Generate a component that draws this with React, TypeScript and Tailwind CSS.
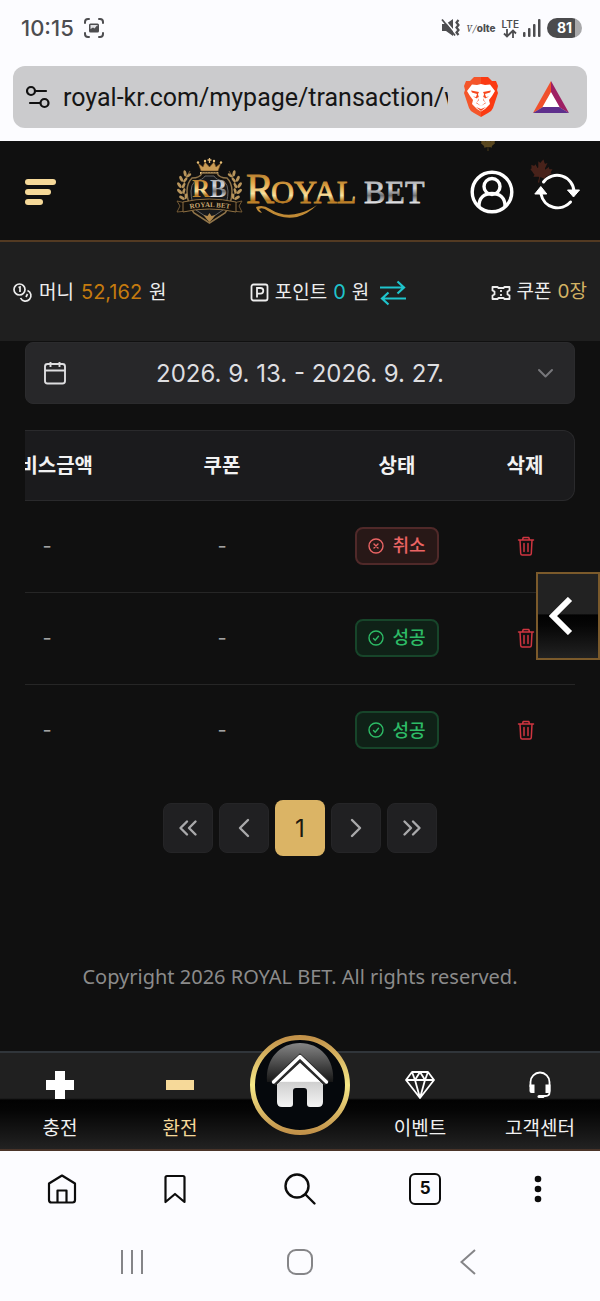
import React from "react";
import { FaCanadianMapleLeaf } from "react-icons/fa";

const laurel = [
  [12, 17, -20],
  [8, 22, -5],
  [6, 28, 5],
  [6, 34, 15],
  [8, 40, 30],
];

function StatusBar() {
  return (
    <div className="flex h-14 items-center justify-between pl-[21px] pr-[18px] text-[#4d4d50]">
      <div className="flex items-center gap-2.5">
        <span className="text-[22px] font-medium leading-7">10:15</span>
        <svg width="20" height="20" viewBox="0 0 20 20" fill="none" stroke="currentColor" strokeWidth="2" strokeLinecap="round">
          <path d="M1 5V4a3 3 0 0 1 3-3h1M15 1h1a3 3 0 0 1 3 3v1M19 15v1a3 3 0 0 1-3 3h-1M5 19H4a3 3 0 0 1-3-3v-1" />
          <rect x="5" y="5.500" width="10" height="9" rx="1.500" fill="currentColor" stroke="none" />
          <path d="M6.500 11l2.500-1.500 1.500 1 2.500-3 .5 1v-1.500h-7z" fill="#fcfcff" stroke="none" opacity=".85" />
        </svg>
      </div>
      <div className="flex items-center">
        <svg width="20" height="20" viewBox="0 0 20 20">
          <path d="M1 6h4l7-5v17l-7-5H1z" fill="currentColor" />
          <path d="M2 0l14 17" stroke="#fcfcff" strokeWidth="1.500" />
          <path d="M1 1.500l13 16" stroke="currentColor" strokeWidth="1.800" />
          <path d="M17.500 2l-2 2.500 2 2.500-2 2.500 2 2.500-2 2.500 2 2.500" fill="none" stroke="currentColor" strokeWidth="2.200" />
        </svg>
        <span className="ml-1.5 text-[10px] font-extrabold leading-4"><i className="font-serif font-normal">V/</i>olte</span>
        <span className="ml-1.5 flex flex-col items-center text-[10px] font-semibold leading-[10px]">
          LTE
          <svg width="14" height="9" viewBox="0 0 14 9" fill="none" stroke="currentColor" strokeWidth="1.800">
            <path d="M4 0v7M1 4.500l3 3 3-3M10 9V2M7 4.500l3-3 3 3" />
          </svg>
        </span>
        <svg className="ml-1" width="18" height="20" viewBox="0 0 18 20" fill="currentColor">
          <rect x="0" y="14" width="2.500" height="5" rx="1" />
          <rect x="5" y="10" width="2.500" height="9" rx="1" />
          <rect x="10" y="6" width="2.500" height="13" rx="1" />
          <rect x="15" y="1" width="2.500" height="18" rx="1" />
        </svg>
        <span className="ml-1.5 flex h-5 w-[35px] items-center justify-center rounded-full bg-linear-to-r from-[#4b4b4d] from-81% to-[#a8a8aa] to-81% text-sm font-bold text-white">81</span>
      </div>
    </div>
  );
}

function AddressBar() {
  return (
    <div className="mx-[13px] mt-2.5 mb-3 flex h-[62px] items-center rounded-xl bg-[#cbcbcd] pl-[13px]">
      <button aria-label="Site settings" className="shrink-0">
        <svg width="24" height="24" viewBox="0 0 24 24" fill="none" stroke="#111" strokeWidth="2.200" strokeLinecap="round">
          <circle cx="5" cy="6" r="4" />
          <path d="M10 6h10M4 18h10" />
          <circle cx="18.500" cy="18" r="4" />
        </svg>
      </button>
      <input
        aria-label="Address"
        readOnly
        defaultValue="royal-kr.com/mypage/transaction/w"
        className="ml-[13px] w-0 flex-1 bg-transparent pt-0.5 font-[Roboto,sans-serif] text-[25px] text-[#161616] outline-none"
      />
      <button aria-label="Brave Shields" className="ml-[15px] shrink-0">
        <svg width="36" height="42" viewBox="0 0 36 42">
          <defs>
            <linearGradient id="brave" x1="0" x2="1">
              <stop offset=".5" stopColor="#f4552a" />
              <stop offset=".5" stopColor="#fb3a12" />
            </linearGradient>
          </defs>
          <path d="M11 1h14l4 4h4l2 5-1 4 1 3-5 15q-1 3-5 5l-7 4-7-4q-4-2-5-5L1 17l1-3-1-4 2-5h4z" fill="url(#brave)" />
          <path d="M9 8.500l5 .5 4-1 4 1 5-.5 5 6.500-3 5-3 4 1 4-5 5-4 2.500-4-2.500-5-5 1-4-3-4-3-5z" fill="#fff" />
          <path d="M8 14.500l8 1.500-1 2 1 6-3 3 5 3 5-3-3-3 1-6-1-2 8-1.500-1 2-5 1.500 1 3 3-.5-4 2-2-3 .500 4 2 3-4.500 3.500-4.500-3.500 2-3 .500-4-2 3-4-2 3 .5 1-3-5-1.500z" fill="#f6481e" />
          <path d="M13 31l5 2 5-2-5 4z" fill="#f6481e" />
        </svg>
      </button>
      <button aria-label="Brave Rewards" className="ml-[34px] mr-[18px] shrink-0">
        <svg width="36" height="34" viewBox="0 0 36 34">
          <path d="M18 1L0 33l10-6 8-14z" fill="#f0502c" />
          <path d="M18 1l18 32-10-6-8-14z" fill="#9e1f63" />
          <path d="M0 33h36l-10-6H10z" fill="#5e2f8c" />
          <path d="M18 12l8.500 15h-17z" fill="#fff" />
        </svg>
      </button>
    </div>
  );
}

function Logo() {
  return (
    <svg width="250" height="72" viewBox="0 0 250 72" role="img" aria-label="Royal Bet">
      <defs>
        <linearGradient id="gold" x1="0" y1="0" x2="0" y2="1">
          <stop offset="0" stopColor="#8d5a1e" />
          <stop offset=".35" stopColor="#e0a544" />
          <stop offset=".6" stopColor="#fbe3a0" />
          <stop offset=".75" stopColor="#b3761f" />
          <stop offset="1" stopColor="#e9b860" />
        </linearGradient>
        <linearGradient id="silver" x1="0" y1="0" x2="0" y2="1">
          <stop offset="0" stopColor="#8f9296" />
          <stop offset=".4" stopColor="#d4d6d9" />
          <stop offset=".6" stopColor="#6d6f72" />
          <stop offset=".8" stopColor="#e2e3e5" />
        </linearGradient>
      </defs>
      <path d="M34.500 2v5M32.500 4h4" stroke="#e0b878" strokeWidth="1.300" />
      <path d="M26 15l-3-8 5 4 2-5 4.500 5L39 6l2 5 5-4-3 8z" fill="#c99b55" stroke="#6b4a1e" strokeWidth=".6" />
      <g fill="#e8c078">
        <circle cx="23" cy="6.500" r="1.200" /><circle cx="30" cy="5" r="1.200" /><circle cx="39" cy="5" r="1.200" /><circle cx="46" cy="6.500" r="1.200" />
      </g>
      <path d="M25 17h19" stroke="#e3bd7c" strokeWidth="2" strokeDasharray="2 .7" />
      <path d="M34.500 67L19 57q-7-9-7-22 0-8 5-13 8 0 10-5h15q2 5 10 5 5 5 5 13 0 13-7 22z" fill="#15120e" stroke="#8f744a" strokeWidth="1.500" />
      <path d="M34.500 63L21 54q-5-8-5-19 0-6 4-10 8-1 10-5h9q2 4 10 5 4 4 4 10 0 11-5 19z" fill="#17191c" stroke="#666" strokeWidth="1" />
      {[0, 1].map((side) => (
        <g key={side} transform={side ? "translate(69 0) scale(-1 1)" : undefined} fill="#b8955c">
          <path d="M15 15Q5 28 11 43" fill="none" stroke="#8d6c3c" strokeWidth=".8" />
          {laurel.map(([x, y, r]) => (
            <g key={y} transform={`translate(${x} ${y}) rotate(${-r})`}>
              <ellipse cx="-2" cy="0" rx="1.500" ry="3.200" transform="rotate(-30)" />
              <ellipse cx="3" cy="0" rx="1.300" ry="3" transform="rotate(35)" />
            </g>
          ))}
          <path d="M11 47L2 45l3 5-3 6 10-1z" fill="#100d0a" stroke="#7d6139" strokeWidth=".9" />
        </g>
      ))}
      <text x="17" y="41" fontFamily="Liberation Serif, serif" fontWeight="700" fontSize="25" fill="url(#gold)">R</text>
      <text x="35" y="41" fontFamily="Liberation Serif, serif" fontWeight="700" fontSize="25" fill="url(#silver)">B</text>
      <path d="M8 46q26-6 53 0v10q-27-6-53 0z" fill="#120f0b" stroke="#8d6f42" strokeWidth="1" />
      <path id="ribbon" d="M12 53.500q22-5 46 0" fill="none" />
      <text fontFamily="Liberation Serif, serif" fontWeight="700" fontSize="7" fill="#c8a872" textAnchor="middle">
        <textPath href="#ribbon" startOffset="50%">ROYAL BET</textPath>
      </text>
      <path d="M34.500 57l2 3 4-1-3 4-3 3-3-3-3-4 4 1z" fill="#b48a4c" />
      <g fontFamily="Liberation Serif, serif" strokeWidth=".8">
        <text x="71" y="47" fontSize="42" fill="url(#gold)" stroke="url(#gold)">R</text>
        <text x="96" y="47" fontSize="32" fill="url(#gold)" stroke="url(#gold)">OYAL</text>
        <text x="189" y="47" fontSize="32" fill="url(#silver)" stroke="url(#silver)">BET</text>
      </g>
      <path d="M81 51q7-3 14 2 14 9 30 4 10-3 17-8-9 9-20 12-15 3-29-6-5-4-9-2l3 4q-5-1-6-6z" fill="#c08a35" />
    </svg>
  );
}

function Header() {
  return (
    <header className="relative grid h-[101px] grid-cols-[1fr_auto_1fr] items-center overflow-hidden border-b-2 border-[#533a22] bg-[#101010] px-5 pt-0.5">
      <FaCanadianMapleLeaf className="absolute -top-1.5 left-[480px] size-4 text-[#59471f]" />
      <FaCanadianMapleLeaf className="absolute left-[529px] top-[18px] size-6 rotate-12 text-[#48221a]" />
      <button aria-label="Menu" className="ml-[5px] flex flex-col items-start gap-1 justify-self-start">
        <span className="h-1.5 w-[31px] rounded-full bg-[#f6d999]" />
        <span className="h-1.5 w-[26px] rounded-full bg-[#f6d999]" />
        <span className="h-1.5 w-[18px] rounded-full bg-[#f6d999]" />
      </button>
      <a href="#home"><Logo /></a>
      <div className="relative flex items-center justify-end gap-5">
        <button aria-label="My page">
          <svg width="44" height="44" viewBox="0 0 44 44" fill="none" stroke="#fff" strokeWidth="3.400">
            <circle cx="22" cy="22" r="19.800" />
            <circle cx="22" cy="16.500" r="8" />
            <path d="M9 36c0-8 5-12.500 13-12.500S35 28 35 36" />
          </svg>
        </button>
        <button aria-label="Refresh">
          <svg width="46" height="44" viewBox="0 0 46 44" fill="none" stroke="#fff" strokeWidth="3">
            <path d="M9.500 12A17 17 0 0 1 40 22M36.500 32A17 17 0 0 1 7 24" strokeLinecap="round" />
            <path d="M33.500 20h12l-6 7zM.800 24h12l-6-7.500z" fill="#fff" stroke="#fff" strokeWidth="1" strokeLinejoin="round" />
          </svg>
        </button>
      </div>
    </header>
  );
}

function Balances() {
  return (
    <section className="flex h-[99px] items-center justify-between bg-[#1f1f1f] px-[13px] pt-0.5 text-[19px] text-[#ededed]">
      <div className="flex items-center gap-1.5">
        <svg width="20" height="20" viewBox="0 0 20 20" fill="none" stroke="currentColor" strokeWidth="1.700">
          <circle cx="6.500" cy="6.500" r="5.500" />
          <path d="M5.500 4.500l1.500-.5v5M14.500 7.500a5.500 5.500 0 1 1-7 7.500" />
          <path d="M13 14l1.500-3" />
        </svg>
        <span className="flex items-baseline gap-[7px]">머니 <span className="text-[20px] text-[#c57b0e]">52,162</span> 원</span>
      </div>
      <div className="flex items-center gap-1.5">
        <svg width="19" height="19" viewBox="0 0 19 19" fill="none" stroke="currentColor" strokeWidth="1.800">
          <rect x="1.500" y="1.500" width="16" height="16" rx="2" />
          <path d="M7 14.500V5h3.500a2.800 2.800 0 0 1 0 5.600H7" />
        </svg>
        <span className="flex items-baseline gap-1.5">포인트 <span className="text-[20px] text-[#1fc4cc]">0</span> 원</span>
        <button aria-label="Convert points" className="ml-1">
          <svg width="28" height="26" viewBox="0 0 28 26" fill="none" stroke="#1fc4cc" strokeWidth="2.200">
            <path d="M1 7.500h24M18.500 1.500l6.500 6-6.500 6M27 18.500H3M9.500 12.500l-6.500 6 6.500 6" />
          </svg>
        </button>
      </div>
      <div className="flex items-center gap-1.5">
        <svg width="20" height="16" viewBox="0 0 20 16" fill="none" stroke="currentColor" strokeWidth="1.800" strokeLinejoin="round">
          <path d="M1.500 2h5l1 1h5l1-1h5v3.500l-2 1v3l2 1V14h-5l-1-1h-5l-1 1h-5v-3.500l2-1v-3l-2-1z" />
          <path d="M10 5v2M10 9v2" />
        </svg>
        <span className="flex items-baseline gap-1.5">쿠폰 <span className="text-[#d3b363]">0장</span></span>
      </div>
    </section>
  );
}

type Status = "cancel" | "success";

function StatusBadge({ status }: { status: Status }) {
  const ok = status === "success";
  return (
    <span
      className={
        ok
          ? "inline-flex h-[38px] items-center gap-2 rounded-lg border-2 border-[#17452a] bg-[#0f2117] px-[11px] align-middle text-[18px] font-medium text-[#2dbb66]"
          : "inline-flex h-[38px] items-center gap-2 rounded-lg border-2 border-[#502929] bg-[#281817] px-[11px] align-middle text-[18px] font-medium text-[#ea6464]"
      }
    >
      <svg width="16" height="16" viewBox="0 0 16 16" fill="none" stroke="currentColor" strokeWidth="1.400" strokeLinecap="round">
        <circle cx="8" cy="8" r="7" />
        <path d={ok ? "M5.500 8.500l1.700 1.700 3.300-4" : "M6 6l4 4M10 6l-4 4"} />
      </svg>
      {ok ? "성공" : "취소"}
    </span>
  );
}

const rows: Status[] = ["cancel", "success", "success"];

function Transactions() {
  return (
    <div className="mt-[26px] flex justify-end overflow-hidden">
      <table className="w-[607px] shrink-0 table-fixed border-separate border-spacing-0 text-center">
        <thead className="h-[71px] text-[20px] text-[#f2f2f2]">
          <tr>
            <th className="w-[158px] border-y border-[#2a2a2c] bg-[#1b1b1d] font-semibold">서비스금액</th>
            <th className="w-[192px] border-y border-[#2a2a2c] bg-[#1b1b1d] font-semibold">쿠폰</th>
            <th className="w-[158px] border-y border-[#2a2a2c] bg-[#1b1b1d] font-semibold">상태</th>
            <th className="rounded-r-xl border-y border-r border-[#2a2a2c] bg-[#1b1b1d] font-semibold">삭제</th>
          </tr>
        </thead>
        <tbody className="text-[20px] text-[#a2a2a2] [&>tr:not(:last-child)>td]:border-b [&>tr>td]:border-[#262626] [&>tr>td]:pb-0.5">
          {rows.map((status, i) => (
            <tr key={i} className="h-[92px]">
              <td>-</td>
              <td>-</td>
              <td><StatusBadge status={status} /></td>
              <td>
                <button aria-label="삭제" className="mx-auto block">
                  <svg width="18" height="20" viewBox="0 0 18 20" fill="none" stroke="#cf3540" strokeWidth="1.500" strokeLinecap="round" strokeLinejoin="round">
                    <path d="M1.500 4h15M5.500 4l.7-2.500h5.600l.7 2.500M3 4l.7 13.500q.1 1.500 1.500 1.500h7.600q1.400 0 1.500-1.500L15 4" />
                    <path d="M7 7.500v8M11 7.500v8" />
                  </svg>
                </button>
              </td>
            </tr>
          ))}
        </tbody>
      </table>
    </div>
  );
}

const pageButton = "flex size-[50px] items-center justify-center rounded-lg border border-[#252527] bg-[#202022] text-[#a9a9ab]";

function PageIcon({ d }: { d: string }) {
  return (
    <svg width="24" height="24" viewBox="0 0 24 24" fill="none" stroke="currentColor" strokeWidth="2.400" strokeLinecap="round" strokeLinejoin="round">
      <path d={d} />
    </svg>
  );
}

function Pagination() {
  return (
    <nav aria-label="Pages" className="mt-[23px] flex items-center justify-center gap-1.5">
      <button aria-label="First" className={pageButton}><PageIcon d="M11 5.500L4.500 12l6.500 6.500M19.500 5.500L13 12l6.500 6.500" /></button>
      <button aria-label="Previous" className={pageButton}><PageIcon d="M16 4l-8 8 8 8" /></button>
      <button aria-current="page" className="h-14 w-[50px] rounded-lg bg-[#dbb465] pt-0.5 text-[24px] text-[#1c1810]">1</button>
      <button aria-label="Next" className={pageButton}><PageIcon d="M8 4l8 8-8 8" /></button>
      <button aria-label="Last" className={pageButton}><PageIcon d="M4.500 5.500L11 12l-6.500 6.500M13 5.500l6.500 6.500-6.500 6.500" /></button>
    </nav>
  );
}

function BottomNav() {
  return (
    <nav className="grid h-[100px] grid-cols-5 border-t-2 border-b-2 border-t-[#30353a] border-b-[#4a3429] bg-[linear-gradient(#202020_0%,#202020_47%,#020202_49%,#050505_60%,#222_100%)] text-[19px] leading-7 text-[#f1f1f1]">
      <a href="#deposit" className="flex flex-col items-center gap-4 pt-[18px]">
        <svg width="28" height="28" viewBox="0 0 28 28" fill="#fff"><path d="M9 0h10v9h9v10h-9v9H9v-9H0V9h9z" /></svg>
        <span>충전</span>
      </a>
      <a href="#withdraw" className="flex flex-col items-center gap-4 pt-[18px] text-[#f6d999]">
        <svg width="28" height="28" viewBox="0 0 28 28" fill="currentColor"><path d="M0 9h28v10H0z" /></svg>
        <span>환전</span>
      </a>
      <a href="#home" aria-label="Home" className="-mt-[18px] justify-self-center self-start">
        <svg width="100" height="100" viewBox="0 0 100 100">
          <defs>
            <linearGradient id="ring" x1="0" y1="0" x2="0" y2="1">
              <stop offset="0" stopColor="#c2924a" />
              <stop offset=".5" stopColor="#f7e987" />
              <stop offset="1" stopColor="#c2924a" />
            </linearGradient>
            <linearGradient id="gloss" x1="0" y1="0" x2="0" y2="1">
              <stop offset="0" stopColor="#858585" />
              <stop offset="1" stopColor="#161616" />
            </linearGradient>
            <linearGradient id="house" x1="0" y1="0" x2="0" y2="1">
              <stop offset=".43" stopColor="#fff" />
              <stop offset=".45" stopColor="#cfcfcf" />
              <stop offset="1" stopColor="#f4f4f4" />
            </linearGradient>
          </defs>
          <path d="M50 50m-47.500 0a47.500 47.500 0 0 1 95 0 47.500 47.500 0 0 1-95 0" fill="#05080c" />
          <path d="M17 47C15 24 30 8 50 8s35 16 33 39z" fill="url(#gloss)" />
          <circle cx="50" cy="50" r="47.500" fill="none" stroke="url(#ring)" strokeWidth="5" />
          <path d="M50 27L27 49v18q0 5 5 5h8q3 0 3-3V56q0-3 3-3h8q3 0 3 3v13q0 3 3 3h8q5 0 5-5V49z" fill="url(#house)" />
          <path d="M23 48L50 23l27 25" fill="none" stroke="#2a2a2a" strokeWidth="7" />
          <path d="M23.500 47L50 21.500 76.500 47" fill="none" stroke="#fff" strokeWidth="3.400" strokeLinecap="round" strokeLinejoin="round" />
        </svg>
      </a>
      <a href="#events" className="flex flex-col items-center gap-4 pt-[18px]">
        <svg width="30" height="28" viewBox="0 0 30 28" fill="none" stroke="#fff" strokeWidth="1.800" strokeLinejoin="round">
          <path d="M7 1h16l6 8-14 18L1 9zM1 9h28M10 9l5 18 5-18M7 1l3 8 5-8 5 8 3-8" />
        </svg>
        <span>이벤트</span>
      </a>
      <a href="#support" className="flex flex-col items-center gap-4 pt-[18px]">
        <svg width="24" height="28" viewBox="0 0 24 28" fill="none" stroke="#fff" strokeWidth="1.800">
          <path d="M2.500 16v-5a9.500 9.500 0 0 1 19 0v10.500q0 3.500-4 3.500h-3" />
          <path d="M1.500 13.500h5v8.500h-3q-2 0-2-2zM22.500 13.500h-5v8.500h3q2 0 2-2z" fill="#fff" stroke="none" />
          <path d="M11 25.500h4" strokeWidth="3" strokeLinecap="round" />
        </svg>
        <span>고객센터</span>
      </a>
    </nav>
  );
}

function BrowserNav() {
  return (
    <footer className="h-[150px] bg-[#fcfcff] text-[#0c0c0c]">
      <div className="grid h-[76px] grid-cols-[9fr_9fr_11fr_9fr_9fr] place-items-center px-1.5">
        <button aria-label="Home page">
          <svg width="30" height="30" viewBox="0 0 30 30" fill="none" stroke="currentColor" strokeWidth="2.200" strokeLinejoin="round">
            <path d="M15 1.500L28 9.500V26q0 2.500-2.500 2.500h-21Q2 28.500 2 26V9.500z" />
            <path d="M10.500 28V16.500h9V28" />
          </svg>
        </button>
        <button aria-label="Bookmarks">
          <svg width="22" height="30" viewBox="0 0 22 30" fill="none" stroke="currentColor" strokeWidth="2.200" strokeLinejoin="round">
            <path d="M1.500 3.500q0-1.500 1.500-1.500h16q1.500 0 1.500 1.500V28L11 20l-9.500 8z" />
          </svg>
        </button>
        <button aria-label="Search">
          <svg width="34" height="34" viewBox="0 0 34 34" fill="none" stroke="currentColor" strokeWidth="2.400" strokeLinecap="round">
            <circle cx="14" cy="14" r="11.500" />
            <path d="M22.500 22.500l9 9" />
          </svg>
        </button>
        <button aria-label="Tabs" className="flex size-8 items-center justify-center rounded-md border-2 border-[#0c0c0c] text-[17px] font-bold">5</button>
        <button aria-label="More">
          <svg width="8" height="28" viewBox="0 0 8 28" fill="currentColor">
            <circle cx="4" cy="4" r="3.300" /><circle cx="4" cy="14" r="3.300" /><circle cx="4" cy="24" r="3.300" />
          </svg>
        </button>
      </div>
      <div className="grid h-[70px] grid-cols-3 place-items-center px-12 text-[#858588]">
        <button aria-label="Recent apps">
          <svg width="24" height="26" viewBox="0 0 24 26" stroke="currentColor" strokeWidth="2"><path d="M2 1v24M12 1v24M22 1v24" /></svg>
        </button>
        <button aria-label="Device home">
          <svg width="26" height="26" viewBox="0 0 26 26" fill="none" stroke="currentColor" strokeWidth="2"><rect x="1" y="1" width="24" height="24" rx="8" /></svg>
        </button>
        <button aria-label="Back">
          <svg width="16" height="26" viewBox="0 0 16 26" fill="none" stroke="currentColor" strokeWidth="2"><path d="M15 1L1.500 13 15 25" /></svg>
        </button>
      </div>
    </footer>
  );
}

export default function App() {
  return (
    <div className="flex min-h-screen flex-col bg-[#101010] font-[Inter,'Noto_Sans_CJK_KR',sans-serif]">
      <div className="flow-root border-b border-[#fcfcff] bg-[#fcfcff]">
        <StatusBar />
        <AddressBar />
      </div>
      <Header />
      <Balances />
      <main className="relative flex flex-1 flex-col px-[25px] pt-px">
        <button className="flex h-[62px] w-full items-center rounded-lg border border-[#2b2b2d] bg-[#272729] px-4 text-[24px] text-[#dedee0]">
          <svg width="26" height="26" viewBox="0 0 26 26" fill="none" stroke="currentColor" strokeWidth="1.900" strokeLinejoin="round">
            <rect x="3" y="4" width="20" height="19.500" rx="2.500" />
            <path d="M3 10.500h20M8.500 2v5M17.500 2v5" />
          </svg>
          <span className="flex-1 pt-0.5">2026. 9. 13. - 2026. 9. 27.</span>
          <svg width="26" height="26" viewBox="0 0 26 26" fill="none" stroke="#77777b" strokeWidth="2" strokeLinecap="round" strokeLinejoin="round">
            <path d="M7 10l6.500 6.500L20 10" />
          </svg>
        </button>
        <Transactions />
        <button aria-label="Open side panel" className="absolute right-0 top-[231px] flex h-[88px] w-16 items-center justify-center border-2 border-[#7b5a2b] bg-[linear-gradient(#222_0%,#222_47%,#020202_49%,#050505_60%,#222_100%)] pr-3.5">
          <svg width="24" height="38" viewBox="0 0 24 38" fill="none" stroke="#fff" strokeWidth="6"><path d="M21 2L4 19l17 17" /></svg>
        </button>
        <Pagination />
        <p className="mt-[107px] text-center font-['Noto_Sans',sans-serif] text-[20px] leading-7 text-[#8b8b8b]">Copyright 2026 ROYAL BET. All rights reserved.</p>
      </main>
      <BottomNav />
      <BrowserNav />
    </div>
  );
}
